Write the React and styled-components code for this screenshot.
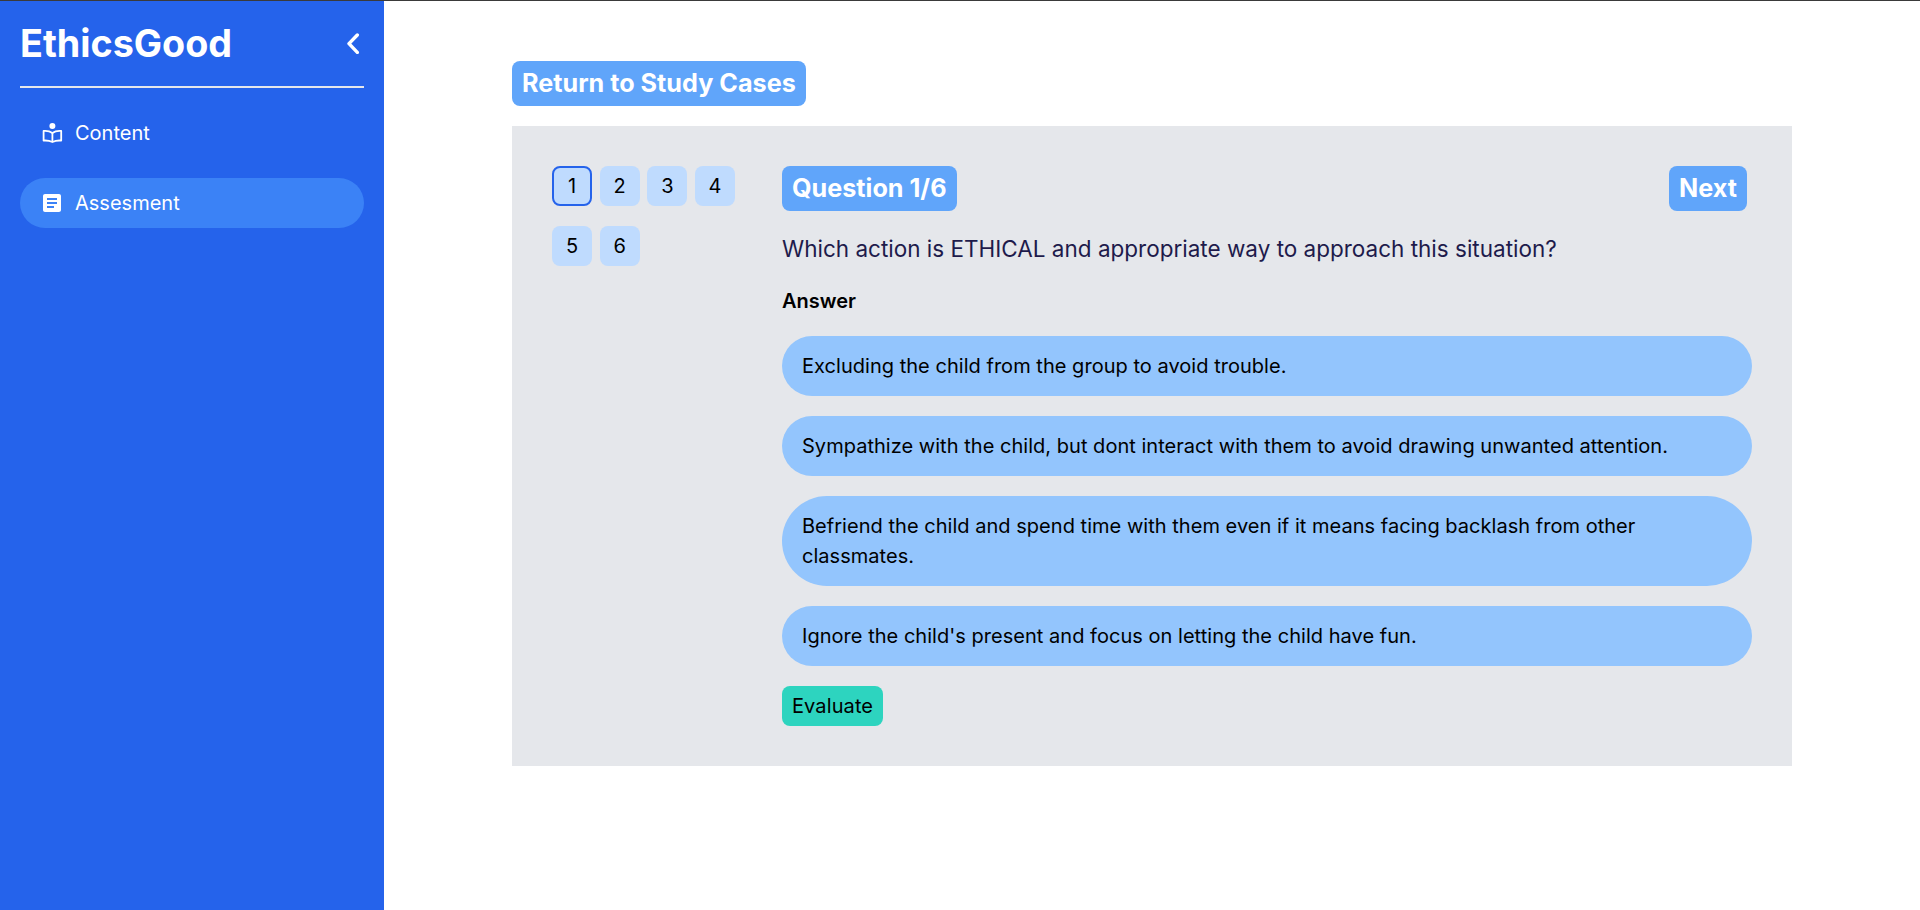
import React from "react";
import styled, { createGlobalStyle } from "styled-components";
import { MdArticle } from "react-icons/md";

const GlobalStyle = createGlobalStyle`
  * { box-sizing: border-box; }
  html, body { margin: 0; padding: 0; background: #fff; }
  body { font-family: Inter, "Liberation Sans", sans-serif; }
`;

const Page = styled.div`
  display: flex;
  height: 910px;
  border-top: 1px solid #3a3a3a;
  overflow: hidden;
`;

const Sidebar = styled.aside`
  width: 384px;
  flex-shrink: 0;
  background: #2563eb;
  padding: 20px;
  color: #fff;
`;

const SideHead = styled.div`
  display: flex;
  align-items: center;
  justify-content: space-between;
  height: 44px;
  margin-bottom: 21px;
`;

const Brand = styled.h1`
  margin: 0;
  font-size: 37.7px;
  line-height: 44px;
  font-weight: 700;
`;

const Collapse = styled.button`
  display: flex;
  padding: 0;
  background: none;
  border: 0;
  color: #fff;
`;

const Divider = styled.div`
  height: 2px;
  background: #e5e7eb;
  margin-bottom: 20px;
`;

const Nav = styled.nav`
  display: flex;
  flex-direction: column;
  gap: 20px;
`;

const NavItem = styled.a`
  display: flex;
  align-items: center;
  gap: 11px;
  height: 50px;
  padding: 0 20px;
  border-radius: 25px;
  font-size: 20px;
  color: #fff;
  background: ${(p) => (p.$active ? "#3b82f6" : "transparent")};
`;

const Main = styled.main`
  flex: 1;
  padding: 60px 128px 0;
`;

const BlueLabel = styled.button`
  display: inline-block;
  height: 45px;
  padding: 0 10px;
  border: 0;
  border-radius: 8px;
  background: #60a5fa;
  color: #fff;
  font-family: inherit;
  font-size: 25.2px;
  font-weight: 700;
  line-height: 45px;
`;

const Panel = styled.section`
  display: flex;
  gap: 46px;
  margin-top: 20px;
  height: 640px;
  padding: 40px;
  background: #e5e7eb;
`;

const Pager = styled.div`
  width: 184px;
  flex-shrink: 0;
  display: flex;
  flex-wrap: wrap;
  align-content: flex-start;
  gap: 20px 7.67px;
`;

const PageButton = styled.button`
  width: 40px;
  height: 40px;
  padding: 0;
  border: ${(p) => (p.$current ? "2px solid #2563eb" : "0")};
  border-radius: 8px;
  background: #bfdbfe;
  color: #000;
  font-family: inherit;
  font-size: 20px;
`;

const Quiz = styled.div`
  flex: 1;
`;

const QuizHead = styled.div`
  display: flex;
  justify-content: space-between;
  padding-right: 5px;
`;

const Prompt = styled.p`
  margin: 20px 0 0;
  font-size: 22.5px;
  line-height: 36px;
  color: #1e1b4b;
`;

const AnswerLabel = styled.h3`
  margin: 20px 0 0;
  font-size: 20px;
  line-height: 28px;
  font-weight: 600;
  color: #000;
`;

const Options = styled.div`
  display: flex;
  flex-direction: column;
  gap: 20px;
  margin-top: 21px;
`;

const Option = styled.div`
  padding: 15px 20px;
  background: #93c5fd;
  color: #000;
  font-size: 20px;
  line-height: 30px;
  letter-spacing: 0.03px;
  border-radius: 45px;
`;

const Evaluate = styled.button`
  display: block;
  height: 40px;
  margin-top: 20px;
  padding: 0 10px;
  border: 0;
  border-radius: 8px;
  background: #2dd4bf;
  color: #000;
  font-family: inherit;
  font-size: 20px;
  letter-spacing: 0.1px;
`;

const options = [
  "Excluding the child from the group to avoid trouble.",
  "Sympathize with the child, but dont interact with them to avoid drawing unwanted attention.",
  "Befriend the child and spend time with them even if it means facing backlash from other classmates.",
  "Ignore the child's present and focus on letting the child have fun.",
];

function ReaderIcon() {
  return (
    <svg width="24" height="24" viewBox="0 0 24 24" fill="none" stroke="currentColor" strokeWidth="1.8" strokeLinejoin="round">
      <circle cx="12.4" cy="5" r="3" fill="currentColor" stroke="none" />
      <path d="M3.6 10c3.4-.3 6.4.3 8.8 2 2.4-1.7 5.4-2.3 8.8-2v9.6c-3.4-.3-6.4.3-8.8 1.4-2.4-1.1-5.4-1.7-8.8-1.4z" />
      <path d="M12.4 12v9" />
    </svg>
  );
}

function ChevronIcon() {
  return (
    <svg width="20" height="22" viewBox="0 0 20 22" fill="none" stroke="currentColor" strokeWidth="3.4" strokeLinecap="round" strokeLinejoin="round">
      <path d="M13.3 3 5 11.7l8.3 8.7" />
    </svg>
  );
}

export default function App() {
  return (
    <Page>
      <GlobalStyle />
      <Sidebar>
        <SideHead>
          <Brand>EthicsGood</Brand>
          <Collapse aria-label="Collapse"><ChevronIcon /></Collapse>
        </SideHead>
        <Divider />
        <Nav>
          <NavItem><ReaderIcon />Content</NavItem>
          <NavItem $active><MdArticle size={24} />Assesment</NavItem>
        </Nav>
      </Sidebar>
      <Main>
        <BlueLabel>Return to Study Cases</BlueLabel>
        <Panel>
          <Pager>
            {[1, 2, 3, 4, 5, 6].map((n) => (
              <PageButton key={n} $current={n === 1}>{n}</PageButton>
            ))}
          </Pager>
          <Quiz>
            <QuizHead>
              <BlueLabel>Question 1/6</BlueLabel>
              <BlueLabel>Next</BlueLabel>
            </QuizHead>
            <Prompt>Which action is ETHICAL and appropriate way to approach this situation?</Prompt>
            <AnswerLabel>Answer</AnswerLabel>
            <Options>
              {options.map((o) => (
                <Option key={o}>{o}</Option>
              ))}
            </Options>
            <Evaluate>Evaluate</Evaluate>
          </Quiz>
        </Panel>
      </Main>
    </Page>
  );
}
